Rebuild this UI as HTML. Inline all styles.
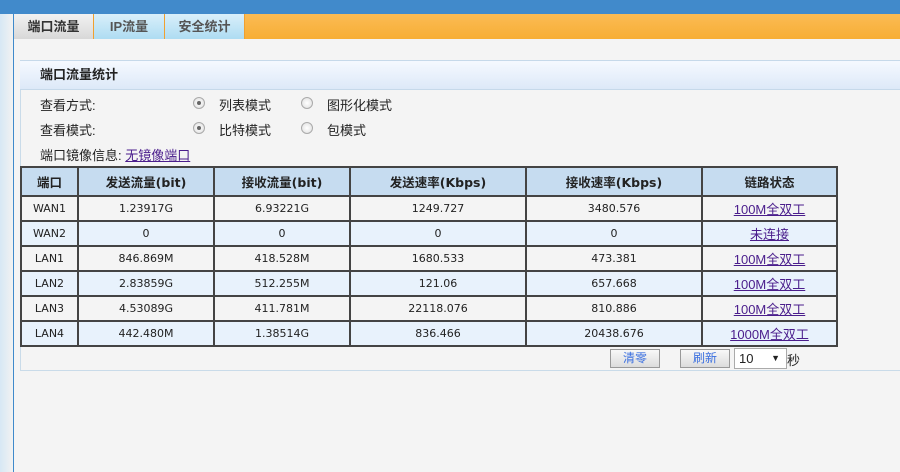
<!DOCTYPE html>
<html><head><meta charset="utf-8"><style>
*{margin:0;padding:0;box-sizing:border-box}
body{width:900px;height:472px;overflow:hidden;background:#f4f4f4;font-family:"Liberation Sans","Noto Sans CJK SC",sans-serif;font-size:12px;color:#222;position:relative}
.abs{position:absolute}
.top{left:0;top:0;width:900px;height:14px;background:#418acb}
.left{left:0;top:14px;width:13px;height:458px;background:linear-gradient(90deg,#d7e8f5,#f2f2f2)}
.lline{left:13px;top:14px;width:1px;height:458px;background:#3f8acb}
.tabbar{left:14px;top:14px;width:886px;height:25px;background:linear-gradient(#fbbb54,#f7ae35)}
.tab{top:14px;height:25px;line-height:25px;text-align:center;font-weight:bold;font-size:13px;color:#555;border-right:1px solid #f0a030}
.panel{left:20px;top:60px;width:880px;height:311px;border:1px solid #c9dbe9;border-right:none}
.ph{left:20px;top:60px;width:880px;height:30px;background:linear-gradient(#f5f9ff,#dde9f8);border-top:1px solid #c6d9ea;border-bottom:1px solid #c6d9ea;font-weight:bold;font-size:13px;line-height:28px;padding-left:20px}
.t{color:#222;font-size:13px}
.radio{width:12px;height:12px;border-radius:50%;border:1px solid #aaa;background:radial-gradient(#fff,#ddd)}
.radio.on::after{content:"";position:absolute;left:3px;top:3px;width:4px;height:4px;border-radius:50%;background:#666}
a{color:#4a1d8c;text-decoration:underline}
table{position:absolute;left:20px;top:166px;border-collapse:collapse;width:818px}
td,th{border:2px solid #444;text-align:center;height:25px;font-weight:normal;font-family:"DejaVu Sans","Noto Sans CJK SC",sans-serif;font-size:11px}
td a{font-family:"Liberation Sans","Noto Sans CJK SC",sans-serif;font-size:13px}
th{background:#c6dcf0;height:29px;font-weight:bold;font-size:12.5px}
tr.b td{background:#e8f2fc}
.btn{top:349px;width:50px;height:19px;border:1px solid #999;background:linear-gradient(#f8f8f8,#dcdcdc);color:#3a6fe0;text-align:center;line-height:17px;font-size:12px}
</style></head><body>
<div class="abs top"></div>
<div class="abs left"></div>
<div class="abs lline"></div>
<div class="abs tabbar"></div>
<div class="abs tab" style="left:14px;width:80px;background:linear-gradient(#f2f2f2,#d8d8d8);color:#333">端口流量</div>
<div class="abs tab" style="left:94px;width:71px;background:linear-gradient(#d9effa,#aedcf2)">IP流量</div>
<div class="abs tab" style="left:165px;width:80px;background:linear-gradient(#d9effa,#aedcf2)">安全统计</div>
<div class="abs panel"></div>
<div class="abs ph">端口流量统计</div>
<div class="abs t" style="left:40px;top:95px">查看方式:</div>
<div class="abs radio on" style="left:193px;top:97px"></div>
<div class="abs t" style="left:219px;top:95px">列表模式</div>
<div class="abs radio" style="left:301px;top:97px"></div>
<div class="abs t" style="left:327px;top:95px">图形化模式</div>
<div class="abs t" style="left:40px;top:120px">查看模式:</div>
<div class="abs radio on" style="left:193px;top:122px"></div>
<div class="abs t" style="left:219px;top:120px">比特模式</div>
<div class="abs radio" style="left:301px;top:122px"></div>
<div class="abs t" style="left:327px;top:120px">包模式</div>
<div class="abs t" style="left:40px;top:145px">端口镜像信息: <a>无镜像端口</a></div>
<table>
<tr><th style="width:57px">端口</th><th style="width:136px">发送流量(bit)</th><th style="width:136px">接收流量(bit)</th><th style="width:176px">发送速率(Kbps)</th><th style="width:176px">接收速率(Kbps)</th><th>链路状态</th></tr>
<tr><td>WAN1</td><td>1.23917G</td><td>6.93221G</td><td>1249.727</td><td>3480.576</td><td><a>100M全双工</a></td></tr>
<tr class="b"><td>WAN2</td><td>0</td><td>0</td><td>0</td><td>0</td><td><a>未连接</a></td></tr>
<tr><td>LAN1</td><td>846.869M</td><td>418.528M</td><td>1680.533</td><td>473.381</td><td><a>100M全双工</a></td></tr>
<tr class="b"><td>LAN2</td><td>2.83859G</td><td>512.255M</td><td>121.06</td><td>657.668</td><td><a>100M全双工</a></td></tr>
<tr><td>LAN3</td><td>4.53089G</td><td>411.781M</td><td>22118.076</td><td>810.886</td><td><a>100M全双工</a></td></tr>
<tr class="b"><td>LAN4</td><td>442.480M</td><td>1.38514G</td><td>836.466</td><td>20438.676</td><td><a>1000M全双工</a></td></tr>
</table>
<div class="abs btn" style="left:610px">清零</div>
<div class="abs btn" style="left:680px">刷新</div>
<div class="abs" style="left:734px;top:348px;width:53px;height:21px;border:1px solid #aaa;background:#fff;font-size:13px;line-height:19px;padding-left:4px">10<span style="position:absolute;right:6px;font-size:9px">▼</span></div>
<div class="abs t" style="left:787px;top:350px">秒</div>
</body></html>
